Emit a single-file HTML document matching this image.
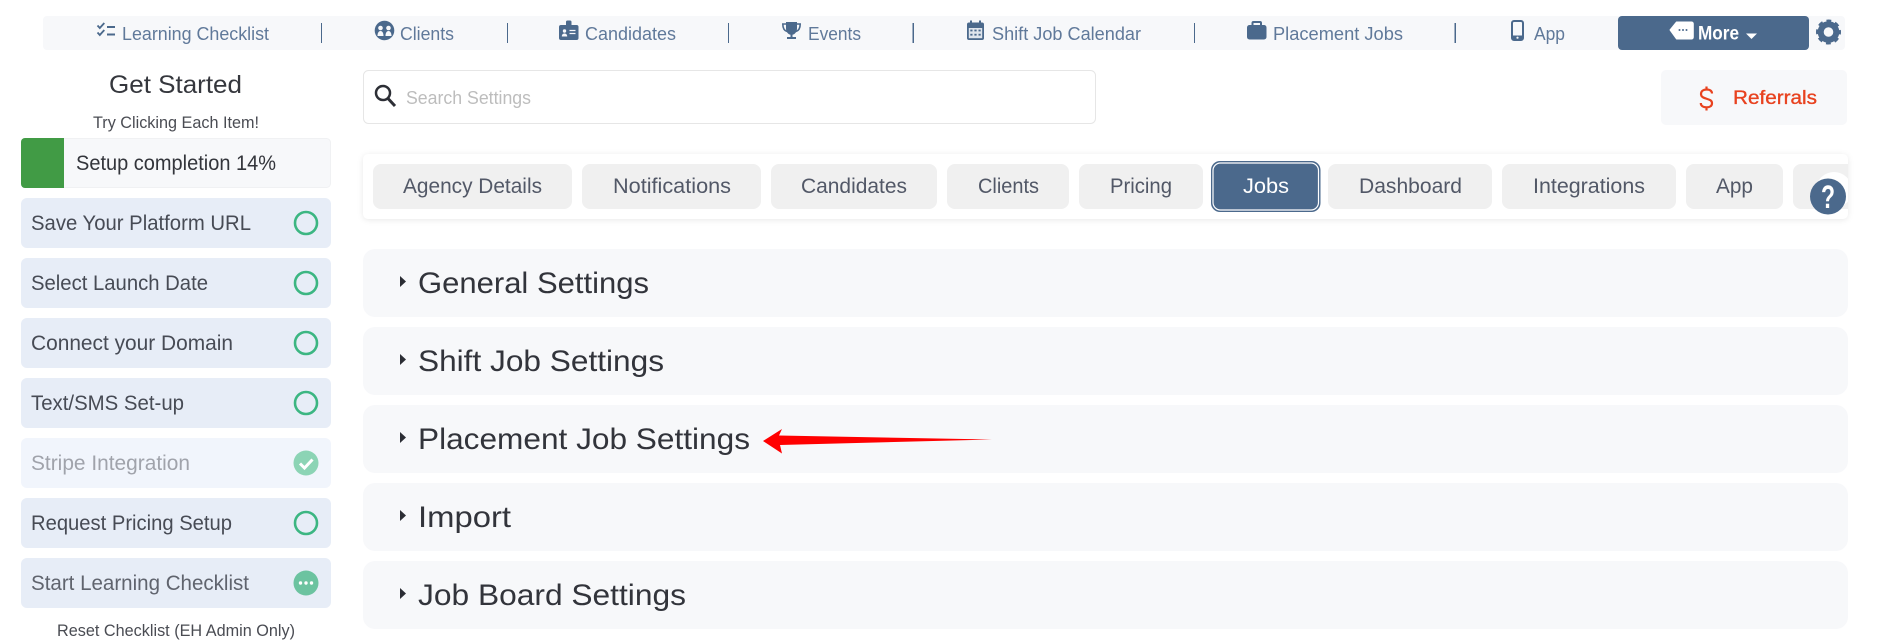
<!DOCTYPE html>
<html lang="en">
<head>
<meta charset="utf-8">
<title>Settings</title>
<style>
html,body{margin:0;padding:0;background:#fff;width:1882px;height:640px;overflow:hidden}
svg{display:block}
text{font-family:"Liberation Sans",sans-serif}
.nav{font-size:18px;fill:#60799a}
.side{font-size:21px;fill:#474b55}
.tab{font-size:21px;fill:#525867}
.acc{font-size:30px;fill:#32343b}
.s{fill:none;stroke:#3cb682;stroke-width:2.600}
.i{fill:#4b698c}
</style>
</head>
<body>
<svg width="1882" height="640" viewBox="0 0 1882 640" xmlns="http://www.w3.org/2000/svg">
<defs><clipPath id="pc"><rect x="363" y="154" width="1485" height="65" rx="5"/></clipPath></defs>

<!-- top bar -->
<rect x="43" y="16" width="1802" height="34" rx="4" fill="#f7f8fa"/>
<g fill="#4b698c">
<rect x="321" y="23" width="1" height="20"/><rect x="507" y="23" width="1" height="20"/><rect x="728" y="23" width="1" height="20"/><rect x="912.500" y="23" width="1.500" height="20"/><rect x="1194" y="23" width="1" height="20"/><rect x="1454.500" y="23" width="1.500" height="20"/>
</g>
<!-- checklist icon -->
<path d="M97.500 25.500l2.300 2.500 4.500-5M97.500 32.500l2.300 2.500 4.500-5" fill="none" stroke="#4b698c" stroke-width="1.800"/>
<path d="M107 27h8M107 34.500h8" stroke="#4b698c" stroke-width="2"/>
<text class="nav" x="122" y="40" textLength="147" lengthAdjust="spacingAndGlyphs">Learning Checklist</text>
<!-- clients icon -->
<circle class="i" cx="384.500" cy="30.500" r="9.800"/>
<circle cx="380.500" cy="28" r="2.300" fill="#f7f8fa"/><circle cx="388.500" cy="28" r="2.300" fill="#f7f8fa"/>
<path d="M377.500 36c0-3.500 1.500-5 3-5s3 1.500 3 5zM385.500 36c0-3.500 1.500-5 3-5s3 1.500 3 5z" fill="#f7f8fa"/>
<text class="nav" x="400" y="40" textLength="54" lengthAdjust="spacingAndGlyphs">Clients</text>
<!-- candidates icon -->
<rect class="i" x="559" y="25" width="19.500" height="15" rx="2"/>
<path class="i" d="M566 25v-3a1.500 1.500 0 0 1 1.500-1.500h2.500a1.500 1.500 0 0 1 1.500 1.500v3z"/>
<circle cx="564.500" cy="31" r="1.700" fill="#f7f8fa"/>
<path d="M561.800 36.500c0-2 1.200-3 2.700-3s2.700 1 2.700 3z" fill="#f7f8fa"/>
<path d="M569.500 30.500h6M569.500 33.500h6" stroke="#f7f8fa" stroke-width="1.200"/>
<text class="nav" x="585" y="40" textLength="91" lengthAdjust="spacingAndGlyphs">Candidates</text>
<!-- trophy icon -->
<path class="i" d="M786 22h11v6.500c0 3.500-2.200 5.800-4.500 6.300v2.200h3.500v2h-9v-2h3.500v-2.200c-2.300-.5-4.500-2.800-4.500-6.300z"/>
<path d="M786 24h-3.200c0 4 1 6.500 4.200 7.500M797 24h3.200c0 4-1 6.500-4.200 7.500" fill="none" stroke="#4b698c" stroke-width="1.600"/>
<text class="nav" x="808" y="40" textLength="53" lengthAdjust="spacingAndGlyphs">Events</text>
<!-- calendar icon -->
<rect class="i" x="967" y="22.500" width="17" height="17.500" rx="2"/>
<rect class="i" x="970" y="20.500" width="2" height="4"/><rect class="i" x="979" y="20.500" width="2" height="4"/>
<rect x="968.800" y="28" width="13.400" height="10.200" fill="#dfe5ec"/>
<g fill="#4b698c">
<rect x="970.300" y="29.600" width="2.200" height="1.800"/><rect x="974.400" y="29.600" width="2.200" height="1.800"/><rect x="978.500" y="29.600" width="2.200" height="1.800"/>
<rect x="970.300" y="33.800" width="2.200" height="1.800"/><rect x="974.400" y="33.800" width="2.200" height="1.800"/><rect x="978.500" y="33.800" width="2.200" height="1.800"/>
</g>
<text class="nav" x="992" y="40" textLength="149" lengthAdjust="spacingAndGlyphs">Shift Job Calendar</text>
<!-- briefcase icon -->
<rect class="i" x="1247" y="25" width="19.500" height="14.500" rx="2.500"/>
<rect x="1252.500" y="22" width="8.500" height="5" rx="1" fill="none" stroke="#4b698c" stroke-width="2"/>
<text class="nav" x="1273" y="40" textLength="130" lengthAdjust="spacingAndGlyphs">Placement Jobs</text>
<!-- phone icon -->
<rect x="1512" y="21" width="11" height="19" rx="2" fill="#f7f8fa" stroke="#4b698c" stroke-width="2"/>
<rect class="i" x="1512" y="35.500" width="11" height="4.500"/>
<circle cx="1517.500" cy="37.700" r="1.100" fill="#f7f8fa"/>
<text class="nav" x="1534" y="40" textLength="31" lengthAdjust="spacingAndGlyphs">App</text>
<!-- more -->
<rect class="i" x="1618" y="16" width="191" height="34" rx="4"/>
<path d="M1670 30l6.500-8h15a1.800 1.800 0 0 1 1.800 1.800v13.400a1.800 1.800 0 0 1-1.800 1.800h-15z" fill="#fff" stroke="#fff" stroke-linejoin="round"/>
<circle cx="1679.500" cy="30" r="1" class="i"/><circle cx="1683" cy="30" r="1" class="i"/><circle cx="1686.500" cy="30" r="1" class="i"/>
<text x="1698" y="39.500" font-size="19" font-weight="700" fill="#fff" textLength="41" lengthAdjust="spacingAndGlyphs">More</text>
<path d="M1746 33.500h11l-5.500 5.500z" fill="#fff"/>
<!-- gear -->
<circle cx="1828.500" cy="32" r="7.800" fill="none" stroke="#4b698c" stroke-width="6"/>
<circle cx="1828.500" cy="32" r="10.300" fill="none" stroke="#4b698c" stroke-width="4.400" stroke-dasharray="4.400 3.690" stroke-dashoffset="2.200"/>

<!-- sidebar -->
<text x="109" y="93" font-size="25" fill="#35373d" textLength="133" lengthAdjust="spacingAndGlyphs">Get Started</text>
<text x="93" y="128" font-size="16.500" fill="#4a4c53" textLength="166" lengthAdjust="spacingAndGlyphs">Try Clicking Each Item!</text>

<rect x="21.500" y="138.500" width="309" height="49" rx="4" fill="#f7f8fa" stroke="#f0f1f3"/>
<path d="M25 138h39v50H25a4 4 0 0 1-4-4v-42a4 4 0 0 1 4-4z" fill="#419b45"/>
<text x="76" y="170" font-size="21.500" fill="#33353b" textLength="200" lengthAdjust="spacingAndGlyphs">Setup completion 14%</text>

<rect x="21" y="198" width="310" height="50" rx="6" fill="#e7edf7"/>
<text class="side" x="31" y="230" textLength="220" lengthAdjust="spacingAndGlyphs">Save Your Platform URL</text>
<circle class="s" cx="306" cy="223" r="11"/>

<rect x="21" y="258" width="310" height="50" rx="6" fill="#e7edf7"/>
<text class="side" x="31" y="290" textLength="177" lengthAdjust="spacingAndGlyphs">Select Launch Date</text>
<circle class="s" cx="306" cy="283" r="11"/>

<rect x="21" y="318" width="310" height="50" rx="6" fill="#e7edf7"/>
<text class="side" x="31" y="350" textLength="202" lengthAdjust="spacingAndGlyphs">Connect your Domain</text>
<circle class="s" cx="306" cy="343" r="11"/>

<rect x="21" y="378" width="310" height="50" rx="6" fill="#e7edf7"/>
<text class="side" x="31" y="410" textLength="153" lengthAdjust="spacingAndGlyphs">Text/SMS Set-up</text>
<circle class="s" cx="306" cy="403" r="11"/>

<rect x="21" y="438" width="310" height="50" rx="6" fill="#f1f5fc"/>
<text class="side" x="31" y="470" textLength="159" lengthAdjust="spacingAndGlyphs" style="fill:#a0a3ab">Stripe Integration</text>
<circle cx="306" cy="463" r="12.500" fill="#8cd4b5"/>
<path d="M300 463.500l4.500 4.500 8-8.500" fill="none" stroke="#fff" stroke-width="3"/>

<rect x="21" y="498" width="310" height="50" rx="6" fill="#e7edf7"/>
<text class="side" x="31" y="530" textLength="201" lengthAdjust="spacingAndGlyphs">Request Pricing Setup</text>
<circle class="s" cx="306" cy="523" r="11"/>

<rect x="21" y="558" width="310" height="50" rx="6" fill="#e7edf7"/>
<text class="side" x="31" y="590" textLength="218" lengthAdjust="spacingAndGlyphs" style="fill:#60646e">Start Learning Checklist</text>
<circle cx="306" cy="583" r="12.500" fill="#6cc3a0"/>
<circle cx="300.500" cy="583" r="1.700" fill="#fff"/><circle cx="306" cy="583" r="1.700" fill="#fff"/><circle cx="311.500" cy="583" r="1.700" fill="#fff"/>

<text x="57" y="636" font-size="16.500" fill="#4a4c53" textLength="238" lengthAdjust="spacingAndGlyphs">Reset Checklist (EH Admin Only)</text>

<!-- search -->
<rect x="363.500" y="70.500" width="732" height="53" rx="5" fill="#fff" stroke="#e6e6e6"/>
<circle cx="383" cy="93" r="7" fill="none" stroke="#2d2f36" stroke-width="2.500"/>
<path d="M388 98.500l7 7.500" stroke="#2d2f36" stroke-width="3"/>
<text x="406" y="104" font-size="18.500" fill="#bdbdbd" textLength="125" lengthAdjust="spacingAndGlyphs">Search Settings</text>

<!-- referrals -->
<rect x="1661" y="70" width="186" height="55" rx="5" fill="#f7f8fa"/>
<path d="M1712 93.500c0-3-2.800-4-5.500-4-3 0-5.500 1.500-5.500 4.500 0 6 11 3.500 11 9.200 0 3-2.500 4.100-5.500 4.100s-5.700-1.200-5.700-4.300M1706.500 86.500v3M1706.500 107.300v3.200" fill="none" stroke="#e8421f" stroke-width="2.200"/>
<text x="1733" y="104" font-size="19" fill="#e8421f" stroke="#e8421f" stroke-width=".35" textLength="84" lengthAdjust="spacingAndGlyphs">Referrals</text>

<!-- tabs panel -->
<rect x="363" y="154" width="1485" height="65" rx="5" fill="#fff" style="filter:drop-shadow(0 1px 3px rgba(0,0,0,.09))"/>
<g fill="#f0f0f0">
<rect x="373" y="164" width="199" height="45" rx="8"/>
<rect x="582" y="164" width="179" height="45" rx="8"/>
<rect x="771" y="164" width="166" height="45" rx="8"/>
<rect x="947" y="164" width="122" height="45" rx="8"/>
<rect x="1079" y="164" width="124" height="45" rx="8"/>
<rect x="1328" y="164" width="164" height="45" rx="8"/>
<rect x="1502" y="164" width="174" height="45" rx="8"/>
<rect x="1686" y="164" width="97" height="45" rx="8"/>
<rect x="1793" y="164" width="90" height="45" rx="8" clip-path="url(#pc)"/>
</g>
<text class="tab" x="403" y="193" textLength="139" lengthAdjust="spacingAndGlyphs">Agency Details</text>
<text class="tab" x="613" y="193" textLength="118" lengthAdjust="spacingAndGlyphs">Notifications</text>
<text class="tab" x="801" y="193" textLength="106" lengthAdjust="spacingAndGlyphs">Candidates</text>
<text class="tab" x="978" y="193" textLength="61" lengthAdjust="spacingAndGlyphs">Clients</text>
<text class="tab" x="1110" y="193" textLength="62" lengthAdjust="spacingAndGlyphs">Pricing</text>
<rect x="1211" y="161" width="109.500" height="51" rx="9" fill="#4b698c"/>
<rect x="1213" y="163" width="105.500" height="47" rx="7.500" fill="#4b698c" stroke="#fff" stroke-width="1.200"/>
<text x="1243" y="193" font-size="21" fill="#fff" textLength="46" lengthAdjust="spacingAndGlyphs">Jobs</text>
<text class="tab" x="1359" y="193" textLength="103" lengthAdjust="spacingAndGlyphs">Dashboard</text>
<text class="tab" x="1533" y="193" textLength="112" lengthAdjust="spacingAndGlyphs">Integrations</text>
<text class="tab" x="1716" y="193" textLength="37" lengthAdjust="spacingAndGlyphs">App</text>
<!-- help -->
<circle cx="1834" cy="190" r="18" fill="#fff" clip-path="url(#pc)"/>
<circle class="i" cx="1828" cy="196.500" r="18"/>
<text x="1821" y="208" font-size="32" font-weight="700" fill="#fff" textLength="14" lengthAdjust="spacingAndGlyphs">?</text>

<!-- accordions -->
<g fill="#f7f8fa">
<rect x="363" y="249" width="1485" height="68" rx="12"/>
<rect x="363" y="327" width="1485" height="68" rx="12"/>
<rect x="363" y="405" width="1485" height="68" rx="12"/>
<rect x="363" y="483" width="1485" height="68" rx="12"/>
<rect x="363" y="561" width="1485" height="68" rx="12"/>
</g>
<g fill="#2b2d34">
<path d="M400 276l6 5.500-6 5.500z"/><path d="M400 354l6 5.500-6 5.500z"/><path d="M400 432l6 5.500-6 5.500z"/><path d="M400 510l6 5.500-6 5.500z"/><path d="M400 588l6 5.500-6 5.500z"/>
</g>
<text class="acc" x="418" y="293" textLength="231" lengthAdjust="spacingAndGlyphs">General Settings</text>
<text class="acc" x="418" y="371" textLength="246" lengthAdjust="spacingAndGlyphs">Shift Job Settings</text>
<text class="acc" x="418" y="449" textLength="332" lengthAdjust="spacingAndGlyphs">Placement Job Settings</text>
<text class="acc" x="418" y="527" textLength="93" lengthAdjust="spacingAndGlyphs">Import</text>
<text class="acc" x="418" y="605" textLength="268" lengthAdjust="spacingAndGlyphs">Job Board Settings</text>

<!-- red arrow -->
<path d="M763 441l19-12-3 6.500 213 4-212 5.500 2 8.500z" fill="#f00"/>
</svg>
</body>
</html>
